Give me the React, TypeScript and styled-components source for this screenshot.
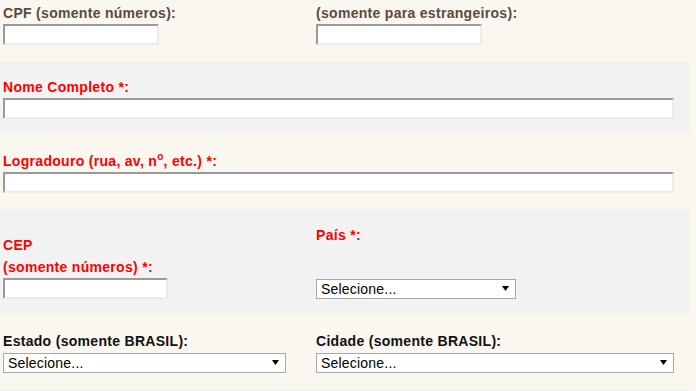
import styled, { createGlobalStyle } from 'styled-components';

const GlobalStyle = createGlobalStyle`
  html, body {
    margin: 0;
    padding: 0;
    background: #faf6f0;
  }
  body {
    font-family: "Liberation Sans", Arial, sans-serif;
  }
`;

const Form = styled.form`
  width: 690px;
  display: flex;
  flex-direction: column;
  gap: 1px;
`;

const Row = styled.div<{ $alt?: boolean; $top?: number }>`
  display: grid;
  grid-template-columns: 313px 1fr;
  padding: ${(p) => p.$top ?? 18}px 16px 15px 3px;
  background: ${(p) => (p.$alt ? '#f2f2f2' : 'transparent')};
`;

const Field = styled.div<{ $full?: boolean }>`
  display: flex;
  flex-direction: column;
  justify-content: space-between;
  grid-column: ${(p) => (p.$full ? '1 / -1' : 'auto')};
`;

const Label = styled.label<{ $color?: string; $tall?: boolean }>`
  display: block;
  font-size: 14px;
  font-weight: bold;
  letter-spacing: 0.3px;
  line-height: ${(p) => (p.$tall ? 22 : 17)}px;
  margin: ${(p) => (p.$tall ? '7px 0 0' : '0 0 2px')};
  color: ${(p) => p.$color ?? '#ff0000'};
  sup {
    font-size: 10px;
    line-height: 0;
  }
`;

const TextInput = styled.input<{ $w?: number }>`
  box-sizing: border-box;
  width: ${(p) => (p.$w ? `${p.$w}px` : '100%')};
  height: 21px;
  margin: 0;
  padding: 0 3px;
  background: #fff;
  border-style: solid;
  border-width: 2px;
  border-color: #9a9a9a #ebebeb #ebebeb #9a9a9a;
  font: 14px "Liberation Sans", Arial, sans-serif;
  outline: none;
`;

const SelectBox = styled.div<{ $w: number }>`
  position: relative;
  width: ${(p) => p.$w}px;
  height: 20px;
  margin-top: 1px;
`;

const Select = styled.select`
  appearance: none;
  box-sizing: border-box;
  width: 100%;
  height: 100%;
  margin: 0;
  padding: 0 18px 0 4px;
  border: 1px solid #a9a9a9;
  border-radius: 0;
  background: #fff;
  color: #000;
  font: 14px "Liberation Sans", Arial, sans-serif;
  letter-spacing: 0.2px;
  outline: none;
`;

const Arrow = styled.svg`
  position: absolute;
  right: 7px;
  top: 7px;
  width: 7px;
  height: 5px;
  pointer-events: none;
`;

const BROWN = '#5a4a40';
const DARK = '#111111';

function Dropdown({ w }: { w: number }) {
  return (
    <SelectBox $w={w}>
      <Select defaultValue="">
        <option value="">Selecione...</option>
      </Select>
      <Arrow viewBox="0 0 7 5">
        <polygon points="0,0 7,0 3.5,5" fill="#000" />
      </Arrow>
    </SelectBox>
  );
}

export default function App() {
  return (
    <>
      <GlobalStyle />
      <Form>
        <Row $top={5}>
          <Field>
            <Label $color={BROWN}>CPF (somente números):</Label>
            <TextInput $w={156} />
          </Field>
          <Field>
            <Label $color={BROWN}>(somente para estrangeiros):</Label>
            <TextInput $w={166} />
          </Field>
        </Row>
        <Row $alt>
          <Field $full>
            <Label>Nome Completo *:</Label>
            <TextInput />
          </Field>
        </Row>
        <Row>
          <Field $full>
            <Label>
              Logradouro (rua, av, n<sup>o</sup>, etc.) *:
            </Label>
            <TextInput />
          </Field>
        </Row>
        <Row $alt>
          <Field>
            <Label $tall>
              CEP
              <br />
              (somente números) *:
            </Label>
            <TextInput $w={165} />
          </Field>
          <Field>
            <Label>País *:</Label>
            <Dropdown w={200} />
          </Field>
        </Row>
        <Row>
          <Field>
            <Label $color={DARK}>Estado (somente BRASIL):</Label>
            <Dropdown w={283} />
          </Field>
          <Field>
            <Label $color={DARK}>Cidade (somente BRASIL):</Label>
            <Dropdown w={358} />
          </Field>
        </Row>
        <Row $alt $top={0} />
      </Form>
    </>
  );
}
